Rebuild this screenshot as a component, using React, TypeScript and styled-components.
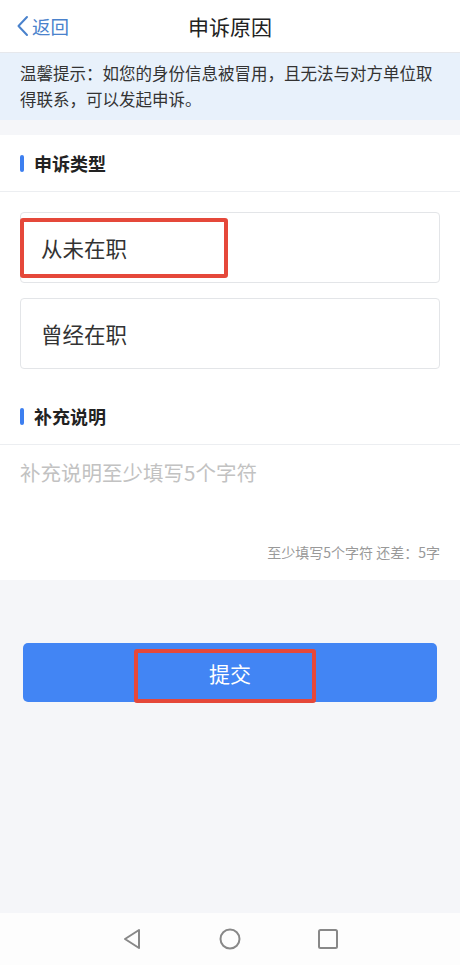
import styled, { createGlobalStyle } from "styled-components";

const GlobalStyle = createGlobalStyle`
  html, body {
    margin: 0;
    padding: 0;
    background: #f5f6f9;
  }
  body {
    font-family: "Noto Sans CJK SC", "Noto Sans", sans-serif;
  }
`;

const Page = styled.div(() => ({
  width: "460px",
  height: "965px",
  display: "flex",
  flexDirection: "column",
  backgroundColor: "#f5f6f9",
  overflow: "hidden",
}));

const Header = styled.header(() => ({
  height: "52px",
  display: "grid",
  gridTemplateColumns: "1fr auto 1fr",
  alignItems: "center",
  backgroundColor: "#fff",
  borderBottom: "1px solid #e6e8ec",
  padding: "0 16px",
}));

const BackLink = styled.div(() => ({
  display: "flex",
  alignItems: "center",
  color: "#4a82cc",
  fontSize: "18.5px",
  gap: "3px",
}));

const Title = styled.h1(() => ({
  margin: 0,
  fontSize: "21px",
  fontWeight: 400,
  color: "#222",
}));

const Notice = styled.p(() => ({
  margin: 0,
  backgroundColor: "#e8f1fb",
  color: "#333",
  fontSize: "16.5px",
  lineHeight: "26px",
  padding: "7px 20px 8px",
}));

const Section = styled.section<{ $top?: number }>(({ $top }) => ({
  backgroundColor: "#fff",
  marginTop: $top ? `${$top}px` : 0,
}));

const SectionHead = styled.div(() => ({
  height: "56px",
  display: "flex",
  alignItems: "center",
  gap: "10px",
  padding: "0 20px",
  borderBottom: "1px solid #eceef1",
  fontSize: "18px",
  fontWeight: 700,
  color: "#222",
}));

const Bar = styled.span(() => ({
  width: "4px",
  height: "17px",
  borderRadius: "2px",
  backgroundColor: "#3d7ff0",
}));

const Options = styled.div(() => ({
  display: "flex",
  flexDirection: "column",
  gap: "15px",
  padding: "20px 20px 19px",
}));

const Option = styled.div(() => ({
  position: "relative",
  height: "69px",
  border: "1px solid #e3e5e8",
  borderRadius: "4px",
  display: "flex",
  alignItems: "center",
  paddingLeft: "20px",
  fontSize: "21.5px",
  color: "#333",
}));

const Highlight = styled.span<{ $left: number; $top: number; $w: number; $h: number }>(
  ({ $left, $top, $w, $h }) => ({
    position: "absolute",
    left: `${$left}px`,
    top: `${$top}px`,
    width: `${$w}px`,
    height: `${$h}px`,
    border: "4px solid #e5483a",
    borderRadius: "3px",
    boxSizing: "border-box",
    pointerEvents: "none",
  })
);

const TextArea = styled.div(() => ({
  height: "123px",
  padding: "12px 20px 0",
  display: "flex",
  flexDirection: "column",
}));

const Placeholder = styled.div(() => ({
  fontSize: "20.5px",
  color: "#c2c2c2",
  flex: 1,
}));

const Counter = styled.div(() => ({
  alignSelf: "flex-end",
  fontSize: "14px",
  color: "#999",
  marginBottom: "18px",
}));

const ButtonWrap = styled.div(() => ({
  padding: "63px 23px 0",
}));

const SubmitButton = styled.button(() => ({
  position: "relative",
  width: "100%",
  height: "59px",
  border: "none",
  borderRadius: "5px",
  backgroundColor: "#4285f4",
  color: "#fff",
  fontSize: "21px",
  fontFamily: "inherit",
}));

const Spacer = styled.div(() => ({
  flex: 1,
}));

const NavBar = styled.nav(() => ({
  height: "52px",
  backgroundColor: "#fdfdfd",
  display: "flex",
  justifyContent: "center",
  alignItems: "center",
  gap: "76px",
}));

const App = () => {
  return (
    <Page>
      <GlobalStyle />
      <Header>
        <BackLink>
          <svg width="13" height="22" viewBox="0 0 13 22">
            <path d="M11 2 L2.5 11 L11 20" fill="none" stroke="#4a82cc" strokeWidth="2" strokeLinecap="round" strokeLinejoin="round" />
          </svg>
          返回
        </BackLink>
        <Title>申诉原因</Title>
        <span />
      </Header>
      <Notice>温馨提示：如您的身份信息被冒用，且无法与对方单位取得联系，可以发起申诉。</Notice>

      <Section $top={15}>
        <SectionHead>
          <Bar />
          申诉类型
        </SectionHead>
        <Options>
          <Option>
            从未在职
            <Highlight $left={-1} $top={5} $w={208} $h={60} />
          </Option>
          <Option>曾经在职</Option>
        </Options>
        <SectionHead>
          <Bar />
          补充说明
        </SectionHead>
        <TextArea>
          <Placeholder>补充说明至少填写5个字符</Placeholder>
          <Counter>至少填写5个字符 还差：5字</Counter>
        </TextArea>
      </Section>

      <ButtonWrap>
        <SubmitButton>
          提交
          <Highlight $left={111} $top={6} $w={182} $h={54} />
        </SubmitButton>
      </ButtonWrap>

      <Spacer />

      <NavBar>
        <svg width="22" height="22" viewBox="0 0 22 22">
          <path d="M18 2 L4 11 L18 20 Z" fill="none" stroke="#888" strokeWidth="2" strokeLinejoin="round" />
        </svg>
        <svg width="22" height="22" viewBox="0 0 22 22">
          <circle cx="11" cy="11" r="9.5" fill="none" stroke="#888" strokeWidth="2" />
        </svg>
        <svg width="22" height="22" viewBox="0 0 22 22">
          <rect x="2" y="2" width="18" height="18" rx="1.5" fill="none" stroke="#888" strokeWidth="2" />
        </svg>
      </NavBar>
    </Page>
  );
};

export default App;
